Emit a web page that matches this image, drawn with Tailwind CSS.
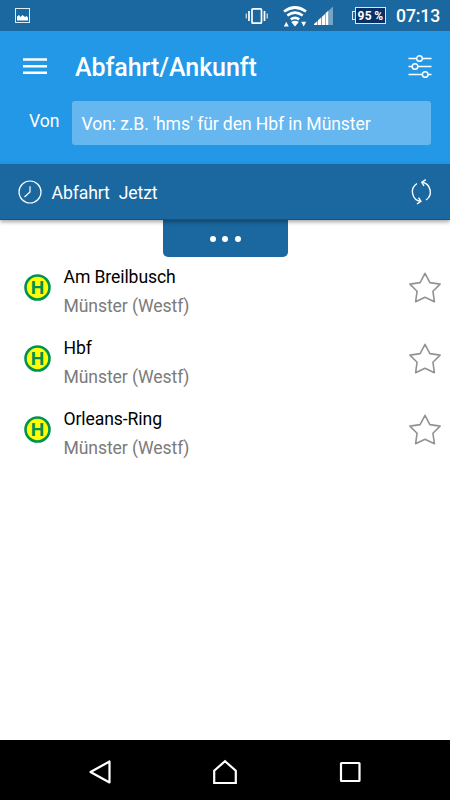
<!DOCTYPE html>
<html lang="de">
<head>
  <meta charset="utf-8">
  <meta name="viewport" content="width=device-width, initial-scale=1">
  <title>Abfahrt/Ankunft</title>
  <script src="https://cdn.jsdelivr.net/npm/@tailwindcss/browser@4"></script>
</head>
<body class="flex h-screen flex-col overflow-hidden bg-white font-['Roboto',sans-serif] text-[17.6px] leading-6 tracking-[-.1px]">

  <!-- Status bar -->
  <div class="flex h-[31px] shrink-0 items-center bg-[#1a689f] pl-[15px] pr-[10px] text-white">
    <svg class="size-[15px]" viewBox="0 0 15 15" fill="none">
      <rect x=".5" y=".5" width="14" height="14" stroke="#dfeaf2"/>
      <path d="M2 12.5V8.500l2-1.500 1.500 2L7.500 7 10 9l1.500-1L13 9.500v3z" fill="#fff"/>
    </svg>
    <svg class="ml-auto h-[18px] w-6" viewBox="0 0 24 18" fill="none" stroke="#fff">
      <rect x="7" y="1.800" width="9.500" height="14.400" rx="1" stroke-width="1.700"/>
      <path d="M4 4v10M19.500 4v10" stroke-width="1.700"/>
      <path d="M1.300 6.500v5M22.200 6.500v5" stroke="#c5d9e7" stroke-width="1.300"/>
    </svg>
    <svg class="ml-[14px] h-[22px] w-6" viewBox="0 0 24 22" fill="none" stroke="#fff" stroke-width="2.700">
      <path d="M1 6.500q11-8 22 0M4.300 10.500q7.700-5.600 15.400 0M7.800 14.300q4.200-3 8.400 0"/>
      <path d="M8.200 17q3.800-2.500 7.600 0L12 21.500zM.8 21.500l2.500-4.700 2.500 4.700zM18.200 16.800h5L20.700 21.500z" fill="#fff" stroke="none"/>
    </svg>
    <svg class="ml-[7px] h-[19px] w-[19px]" viewBox="0 0 19 19">
      <path d="M15 4.200 19 .5V19h-4z" fill="#76a4c5"/>
      <path d="M0 19v-1l3.400-3V19zM4 19v-4.800l3.400-3V19zM8 19v-8.300l3-2.700V19zM11.500 19V7.300L14.500 4.600V19z" fill="#fff"/>
    </svg>
    <div class="ml-[19px] flex h-[17px] w-[34px] items-center">
      <span class="h-[9px] w-[3px] border border-r-0 border-[#dce8f0]"></span>
      <span class="flex h-[17px] w-[31px] items-center justify-center border border-[#dce8f0] bg-[#0a2f64] text-[12px] font-bold leading-none tracking-[.2px] whitespace-nowrap">95&#8201;%</span>
    </div>
    <span class="ml-[10px] mt-px w-[44px] text-[17.600px] font-medium leading-5 whitespace-nowrap">07:13</span>
  </div>

  <!-- App bar -->
  <header class="h-[133px] shrink-0 bg-[#2398e7] text-white">
    <div class="flex h-[70px] items-center pl-[23px] pr-[18px]">
      <svg class="h-4 w-6" viewBox="0 0 24 16" stroke="#fff" stroke-width="2.400">
        <path d="M0 1.500h24M0 8.200h24M0 14.700h24"/>
      </svg>
      <h1 class="ml-7 mt-[3px] text-[25px] font-medium leading-8 tracking-[-.05px] whitespace-nowrap">Abfahrt/Ankunft</h1>
      <svg class="ml-auto h-6 w-6" viewBox="0 0 24 24" fill="#2398e7" stroke="#fff" stroke-width="1.400">
        <path d="M.5 4.500h23M.5 12.500h23M.5 20.500h23"/>
        <circle cx="11.500" cy="4.500" r="2.800"/>
        <circle cx="7" cy="12.500" r="2.800"/>
        <circle cx="17.200" cy="20.500" r="2.800"/>
      </svg>
    </div>
    <div class="flex pl-[29px] pr-[19px]">
      <label class="mt-2 w-[43px] shrink-0">Von</label>
      <div class="flex h-11 flex-1 items-center rounded-[3px] bg-[#66b7ef] pl-[9.500px] pt-[2px] whitespace-nowrap">Von: z.B. 'hms' für den Hbf in Münster</div>
    </div>
  </header>

  <!-- Time selection -->
  <div class="z-10 flex h-14 shrink-0 items-center border-b border-[#08558f] bg-[#1a689f] pl-[18px] pr-[17px] text-white shadow-[0_2px_4px_rgba(0,0,0,0.35)]">
    <svg class="size-6" viewBox="0 0 24 24" fill="none" stroke="#fff" stroke-width="1.200">
      <circle cx="12" cy="12" r="11"/>
      <path d="M12 6.300V12l-5.500 5"/>
    </svg>
    <span class="ml-[9.500px] mt-[2px]">Abfahrt</span>
    <span class="ml-[9px] mt-[2px]">Jetzt</span>
    <svg class="ml-auto mt-px h-[26px] w-6" viewBox="0 0 24 26" fill="none" stroke="#fff" stroke-width="1.400">
      <path d="M8 4.500A9.800 9.800 0 0 0 12 22.500M17 21A9.800 9.800 0 0 0 13 3.200"/>
      <path d="M9.500 18.700l2.400 3.700-4 2.600M15 7L12.800 3.300l4-2.600"/>
    </svg>
  </div>

  <!-- Pull-down handle -->
  <div class="mx-auto flex h-[37px] w-[125px] shrink-0 items-center justify-center gap-[6.500px] rounded-b-[5px] bg-[#1a689f]">
    <span class="size-[6px] rounded-full bg-white"></span>
    <span class="size-[6px] rounded-full bg-white"></span>
    <span class="size-[6px] rounded-full bg-white"></span>
  </div>

  <!-- Stops -->
  <ul class="flex-1 pt-[2px]">
    <li class="flex h-[71px] pl-6 pr-[9px]">
      <svg class="mt-[15px] size-[27px]" viewBox="0 0 27 27">
        <circle cx="13.500" cy="13.500" r="12" fill="#ff0" stroke="#009252" stroke-width="2.600"/>
        <text x="13.500" y="20" text-anchor="middle" textLength="13.500" lengthAdjust="spacingAndGlyphs" fill="#009252" class="text-[18.500px] font-bold tracking-normal">H</text>
      </svg>
      <div class="ml-[12.500px] pt-[6px]">
        <p class="text-black">Am Breilbusch</p>
        <p class="mt-[5px] text-[#7b7b7b]">Münster (Westf)</p>
      </div>
      <svg class="ml-auto mt-[13px] h-[31px] w-8" viewBox="0 0 32 31" fill="none" stroke="#929292" stroke-width="1.600" stroke-linejoin="round">
        <path d="M16 1.300l4.900 9.300 10.200 1.500-7.200 7.100 1.500 10.500L16 25.200l-9.400 4.500 1.500-10.500L.9 12.100l10.200-1.500z"/>
      </svg>
    </li>
    <li class="flex h-[71px] pl-6 pr-[9px]">
      <svg class="mt-[15px] size-[27px]" viewBox="0 0 27 27">
        <circle cx="13.500" cy="13.500" r="12" fill="#ff0" stroke="#009252" stroke-width="2.600"/>
        <text x="13.500" y="20" text-anchor="middle" textLength="13.500" lengthAdjust="spacingAndGlyphs" fill="#009252" class="text-[18.500px] font-bold tracking-normal">H</text>
      </svg>
      <div class="ml-[12.500px] pt-[6px]">
        <p class="text-black">Hbf</p>
        <p class="mt-[5px] text-[#7b7b7b]">Münster (Westf)</p>
      </div>
      <svg class="ml-auto mt-[13px] h-[31px] w-8" viewBox="0 0 32 31" fill="none" stroke="#929292" stroke-width="1.600" stroke-linejoin="round">
        <path d="M16 1.300l4.900 9.300 10.200 1.500-7.200 7.100 1.500 10.500L16 25.200l-9.400 4.500 1.500-10.500L.9 12.100l10.200-1.500z"/>
      </svg>
    </li>
    <li class="flex h-[71px] pl-6 pr-[9px]">
      <svg class="mt-[15px] size-[27px]" viewBox="0 0 27 27">
        <circle cx="13.500" cy="13.500" r="12" fill="#ff0" stroke="#009252" stroke-width="2.600"/>
        <text x="13.500" y="20" text-anchor="middle" textLength="13.500" lengthAdjust="spacingAndGlyphs" fill="#009252" class="text-[18.500px] font-bold tracking-normal">H</text>
      </svg>
      <div class="ml-[12.500px] pt-[6px]">
        <p class="text-black">Orleans-Ring</p>
        <p class="mt-[5px] text-[#7b7b7b]">Münster (Westf)</p>
      </div>
      <svg class="ml-auto mt-[13px] h-[31px] w-8" viewBox="0 0 32 31" fill="none" stroke="#929292" stroke-width="1.600" stroke-linejoin="round">
        <path d="M16 1.300l4.900 9.300 10.200 1.500-7.200 7.100 1.500 10.500L16 25.200l-9.400 4.500 1.500-10.500L.9 12.100l10.200-1.500z"/>
      </svg>
    </li>
  </ul>

  <!-- System navigation -->
  <nav class="flex h-[60px] shrink-0 items-center justify-between bg-black px-[88px]">
    <svg class="mt-1 size-6" viewBox="0 0 24 24" fill="none" stroke="#fff" stroke-width="2.200" stroke-linejoin="round">
      <path d="M21.500 1.500v21L2.500 12z"/>
    </svg>
    <svg class="mt-[3px] h-[26px] w-[26px]" viewBox="0 0 26 26" fill="none" stroke="#fff" stroke-width="2.200">
      <path d="M2.200 24V11.800L13 2.200l10.800 9.600V24z"/>
    </svg>
    <svg class="mt-1 size-6" viewBox="0 0 24 24" fill="none" stroke="#fff" stroke-width="2.200">
      <rect x="3" y="3" width="18.500" height="18" rx=".5"/>
    </svg>
  </nav>
</body>
</html>
